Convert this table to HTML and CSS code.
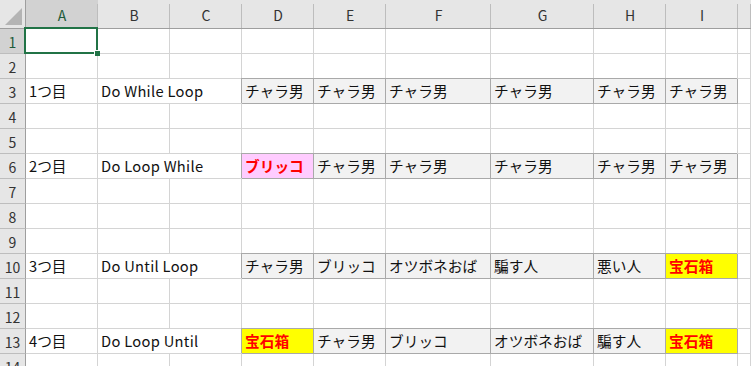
FILE: index.html
```html
<!DOCTYPE html>
<html lang="ja">
<head>
<meta charset="utf-8">
<title>Loop</title>
<link rel="stylesheet" href="styles.css">
</head>
<body>
<div class="sheet">
  <!-- column headers -->
  <div class="corner"><span class="tri"></span></div>
  <div class="ch sel">A</div><div class="ch">B</div><div class="ch">C</div><div class="ch">D</div><div class="ch">E</div><div class="ch">F</div><div class="ch">G</div><div class="ch">H</div><div class="ch">I</div><div class="ch last"></div>

  <!-- 1 -->
  <div class="rh sel">1</div>
  <div class="c active"></div><div class="c"></div><div class="c"></div><div class="c"></div><div class="c"></div><div class="c"></div><div class="c"></div><div class="c"></div><div class="c"></div><div class="c"></div>
  <!-- 2 -->
  <div class="rh">2</div>
  <div class="c"></div><div class="c"></div><div class="c"></div><div class="c"></div><div class="c"></div><div class="c"></div><div class="c"></div><div class="c"></div><div class="c"></div><div class="c"></div>
  <!-- 3 -->
  <div class="rh">3</div>
  <div class="c">1つ目</div><div class="c wide">Do While Loop</div>
  <div class="c d">チャラ男</div><div class="c d">チャラ男</div><div class="c d">チャラ男</div><div class="c d">チャラ男</div><div class="c d">チャラ男</div><div class="c d">チャラ男</div><div class="c"></div>
  <!-- 4 -->
  <div class="rh">4</div>
  <div class="c"></div><div class="c"></div><div class="c"></div><div class="c"></div><div class="c"></div><div class="c"></div><div class="c"></div><div class="c"></div><div class="c"></div><div class="c"></div>
  <!-- 5 -->
  <div class="rh">5</div>
  <div class="c"></div><div class="c"></div><div class="c"></div><div class="c"></div><div class="c"></div><div class="c"></div><div class="c"></div><div class="c"></div><div class="c"></div><div class="c"></div>
  <!-- 6 -->
  <div class="rh">6</div>
  <div class="c">2つ目</div><div class="c wide">Do Loop While</div>
  <div class="c d pink">ブリッコ</div><div class="c d">チャラ男</div><div class="c d">チャラ男</div><div class="c d">チャラ男</div><div class="c d">チャラ男</div><div class="c d">チャラ男</div><div class="c"></div>
  <!-- 7 -->
  <div class="rh">7</div>
  <div class="c"></div><div class="c"></div><div class="c"></div><div class="c"></div><div class="c"></div><div class="c"></div><div class="c"></div><div class="c"></div><div class="c"></div><div class="c"></div>
  <!-- 8 -->
  <div class="rh">8</div>
  <div class="c"></div><div class="c"></div><div class="c"></div><div class="c"></div><div class="c"></div><div class="c"></div><div class="c"></div><div class="c"></div><div class="c"></div><div class="c"></div>
  <!-- 9 -->
  <div class="rh">9</div>
  <div class="c"></div><div class="c"></div><div class="c"></div><div class="c"></div><div class="c"></div><div class="c"></div><div class="c"></div><div class="c"></div><div class="c"></div><div class="c"></div>
  <!-- 10 -->
  <div class="rh">10</div>
  <div class="c">3つ目</div><div class="c wide">Do Until Loop</div>
  <div class="c d">チャラ男</div><div class="c d">ブリッコ</div><div class="c d">オツボネおば</div><div class="c d">騙す人</div><div class="c d">悪い人</div><div class="c d gold">宝石箱</div><div class="c"></div>
  <!-- 11 -->
  <div class="rh">11</div>
  <div class="c"></div><div class="c"></div><div class="c"></div><div class="c"></div><div class="c"></div><div class="c"></div><div class="c"></div><div class="c"></div><div class="c"></div><div class="c"></div>
  <!-- 12 -->
  <div class="rh">12</div>
  <div class="c"></div><div class="c"></div><div class="c"></div><div class="c"></div><div class="c"></div><div class="c"></div><div class="c"></div><div class="c"></div><div class="c"></div><div class="c"></div>
  <!-- 13 -->
  <div class="rh">13</div>
  <div class="c">4つ目</div><div class="c wide">Do Loop Until</div>
  <div class="c d gold">宝石箱</div><div class="c d">チャラ男</div><div class="c d">ブリッコ</div><div class="c d">オツボネおば</div><div class="c d">騙す人</div><div class="c d gold">宝石箱</div><div class="c"></div>
  <!-- 14 -->
  <div class="rh">14</div>
  <div class="c"></div><div class="c"></div><div class="c"></div><div class="c"></div><div class="c"></div><div class="c"></div><div class="c"></div><div class="c"></div><div class="c"></div><div class="c"></div>
</div>
</body>
</html>
```

FILE: styles.css
```css
html, body {
  margin: 0;
  padding: 0;
  background: #ffffff;
}

.sheet {
  display: grid;
  grid-template-columns: 26px 72px 72px 72px 72px 72px 105px 103px 72px 72px 1fr;
  grid-template-rows: 29px repeat(14, 25px);
  width: 751px;
  height: 366px;
  overflow: hidden;
  font-family: "Noto Sans CJK JP", "Noto Sans", sans-serif;
}

/* ordinary cells */
.c {
  box-sizing: border-box;
  border-right: 1px solid #d4d4d4;
  border-bottom: 1px solid #d4d4d4;
  display: flex;
  align-items: center;
  padding: 0 0 2px 3px;
  font-size: 14.7px;
  color: #111111;
  white-space: nowrap;
  overflow: visible;
  position: relative;
}

.c.wide {
  grid-column: span 2;
  letter-spacing: 0.3px;
}

/* filled data cells with a darker frame */
.c.d {
  background: #f2f2f2;
  border-right-color: #a9a9a9;
  border-bottom-color: #a9a9a9;
  box-shadow: -1px -1px 0 #a9a9a9;
}

.c.pink {
  background: #ffccff;
  color: #ff0000;
  font-weight: bold;
}

.c.gold {
  background: #ffff00;
  color: #ff0000;
  font-weight: bold;
}

/* active cell frame and fill handle */
.c.active::before {
  content: "";
  position: absolute;
  top: -2px;
  left: -2px;
  right: -1px;
  bottom: -1px;
  border: 2px solid #217346;
  z-index: 2;
}

.c.active::after {
  content: "";
  position: absolute;
  right: -3px;
  bottom: -3px;
  width: 5px;
  height: 5px;
  background: #217346;
  border-left: 1px solid #ffffff;
  border-top: 1px solid #ffffff;
  z-index: 3;
}

/* headers */
.corner {
  box-sizing: border-box;
  background: #e6e6e6;
  border-right: 1px solid #9e9e9e;
  border-bottom: 1px solid #9e9e9e;
  position: relative;
}

.tri {
  position: absolute;
  right: 3px;
  bottom: 3px;
  width: 0;
  height: 0;
  border-left: 17px solid transparent;
  border-bottom: 17px solid #b4b4b4;
}

.ch {
  box-sizing: border-box;
  background: #e6e6e6;
  border-bottom: 1px solid #9e9e9e;
  display: flex;
  align-items: center;
  justify-content: center;
  padding-top: 2px;
  font-size: 14px;
  color: #333333;
  position: relative;
}

.ch::after {
  content: "";
  position: absolute;
  top: 4px;
  bottom: 0;
  right: 0;
  width: 1px;
  background: #bdbdbd;
}

.rh {
  box-sizing: border-box;
  background: #e6e6e6;
  border-right: 1px solid #9e9e9e;
  border-bottom: 1px solid #bdbdbd;
  display: flex;
  align-items: center;
  justify-content: center;
  padding-top: 1px;
  font-size: 14px;
  color: #333333;
}

.ch.sel,
.rh.sel {
  background: #d2d2d2;
  color: #1e5b3a;
}
```
